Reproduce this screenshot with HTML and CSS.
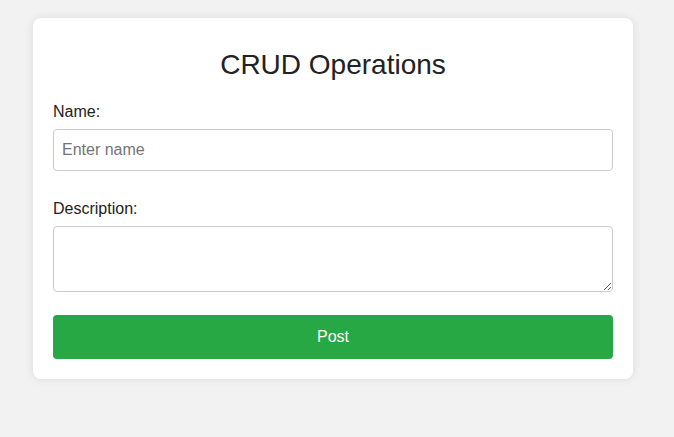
FILE: index.html
```
<!DOCTYPE html>
<html lang="en">
<head>
<meta charset="utf-8">
<title>CRUD Operations</title>
<link rel="stylesheet" href="styles.css">
</head>
<body>
<div class="container">
  <h2 class="title">CRUD Operations</h2>
  <form class="form">
    <label class="label" for="name">Name:</label>
    <input class="field" id="name" type="text" placeholder="Enter name">
    <label class="label" for="desc">Description:</label>
    <textarea class="area" id="desc"></textarea>
    <button class="btn" type="button">Post</button>
  </form>
</div>
</body>
</html>
```
FILE: styles.css
```
* { box-sizing: border-box; }
html, body { margin: 0; padding: 0; }
body {
  background: #f2f2f2;
  font-family: "Liberation Sans", Arial, sans-serif;
  color: #222;
  height: 437px;
  padding-top: 18px;
}
.container {
  width: 600px;
  margin-left: 33px;
  background: #fff;
  border-radius: 8px;
  box-shadow: 0 0 10px rgba(0,0,0,0.1);
  padding: 31px 20px 20px;
}
.title {
  margin: 0 0 22px;
  font-size: 28px;
  font-weight: normal;
  line-height: 32px;
  text-align: center;
  color: #222;
}
.form { display: flex; flex-direction: column; }
.label {
  display: block;
  font-size: 16px;
  line-height: 18px;
  margin-bottom: 8px;
}
.field {
  display: block;
  width: 100%;
  height: 42px;
  padding: 10px 8px;
  font: 16px "Liberation Sans", Arial, sans-serif;
  border: 1px solid #ccc;
  border-radius: 4px;
  margin-bottom: 29px;
  color: #222;
}
.field::placeholder { color: #757575; }
.area {
  display: block;
  width: 100%;
  height: 66px;
  padding: 8px;
  font: 16px "Liberation Sans", Arial, sans-serif;
  border: 1px solid #ccc;
  border-radius: 4px;
  margin-bottom: 23px;
  resize: vertical;
}
.btn {
  display: block;
  width: 100%;
  height: 44px;
  background: #28a745;
  color: #fff;
  border: none;
  border-radius: 4px;
  font: 16px "Liberation Sans", Arial, sans-serif;
  cursor: pointer;
}
```
